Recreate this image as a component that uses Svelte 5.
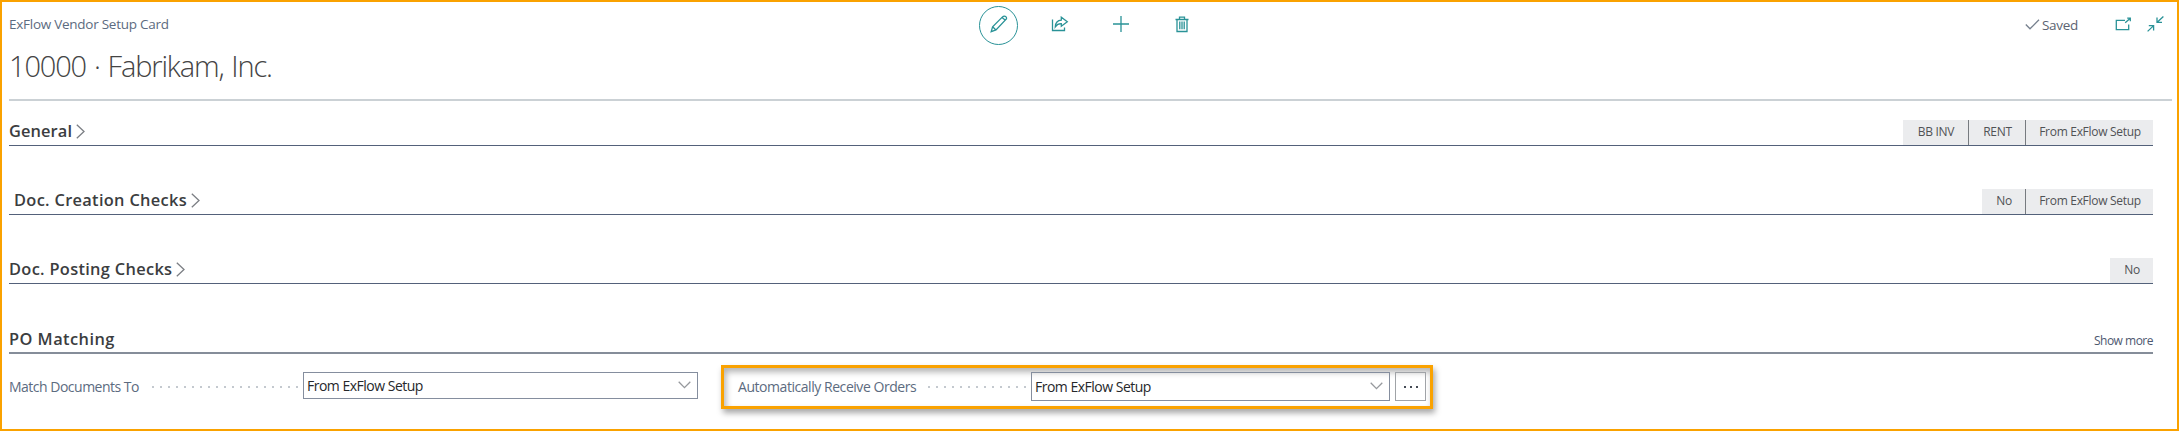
<script>
  const sections = [
    { title: 'General', cls: 'general', chips: ['BB INV', 'RENT', 'From ExFlow Setup'] },
    { title: 'Doc. Creation Checks', cls: 'creation', chips: ['No', 'From ExFlow Setup'] },
    { title: 'Doc. Posting Checks', cls: 'posting', chips: ['No'] }
  ];
  const chipWidths = { 'BB INV': 65, RENT: 57, 'From ExFlow Setup': 128, No: 43 };
</script>

{#snippet dropdown(value)}
  <div class="select">
    <span class="value">{value}</span>
    <svg width="13" height="8" viewBox="0 0 13 8"><path d="M.7.8 6.5 6.6 12.3.8" /></svg>
  </div>
{/snippet}

<main class="page">
  <header>
    <div class="names">
      <div class="caption"><span>ExFlow Vendor Setup Card</span></div>
      <h1>10000 · Fabrikam, Inc.</h1>
    </div>
    <nav class="actions">
      <button class="edit" aria-label="Edit">
        <svg width="18" height="18" viewBox="0 0 18 18"><path d="M1.2 16.6 2.6 11.8 12.5 1.9Q13.8.7 15.2 1.3 17 2.3 16.4 3.9L6 14.9ZM2.6 11.8 6 14.9M12 2.5 15.4 5.2" /></svg>
      </button>
      <button aria-label="Share">
        <svg width="18" height="16" viewBox="0 0 18 16"><path d="M1.5 3.5V14.5H13.5V11.5M1.5 14.5V13M4.3 10.8Q4.6 4.5 10.3 4.2V1.2L16.3 5.8 10.3 10.3V7.6Q6.5 7.5 4.3 10.8Z" /></svg>
      </button>
      <button aria-label="New">
        <svg width="18" height="18" viewBox="0 0 18 18"><path d="M9 1V17M1 9H17" /></svg>
      </button>
      <button aria-label="Delete">
        <svg width="14" height="17" viewBox="0 0 14 17"><path d="M.5 3.5H13.5M4.5 3.5V1.2H9.5V3.5M2 3.5V15.5H12V3.5M4.8 5.5V13.3M7 5.5V13.3M9.2 5.5V13.3" /></svg>
      </button>
    </nav>
    <div class="status">
      <svg class="check" width="15" height="11" viewBox="0 0 15 11"><path d="M.8 5.5 5 9.8 14 .8" /></svg>
      <span class="saved">Saved</span>
      <svg class="popout" width="17" height="14" viewBox="0 0 17 14"><path d="M10 3.3H1.3V12.7H13.7V7.5M10.2 5.8 15.3 1.2M12.2 1.2H15.3V4.2" /></svg>
      <svg class="collapse" width="17" height="16" viewBox="0 0 17 16"><path d="M16.4.6 10.2 6.2M10 1.6V6.4H15M.6 15.4 6.4 9.9M1.8 9.6H6.6V14.4" /></svg>
    </div>
  </header>

  {#each sections as s}
    <section class="fasttab {s.cls}">
      <h2><span>{s.title}</span></h2>
      <svg class="chevron" width="9" height="15" viewBox="0 0 9 15"><path d="M.8.8 8 7.5.8 14.2" /></svg>
      <div class="chips">
        {#each s.chips as c}
          <span class="chip" style="width: {chipWidths[c]}px">{c}</span>
        {/each}
      </div>
    </section>
  {/each}

  <section class="fasttab po">
    <h2><span>PO Matching</span></h2>
    <a class="more" href="#more">Show more</a>
  </section>

  <div class="fields">
    <div class="field first">
      <label for="match"><span>Match Documents To</span></label>
      <div class="dots"></div>
      {@render dropdown('From ExFlow Setup')}
    </div>
    <div class="field second">
      <label for="auto"><span>Automatically Receive Orders</span></label>
      <div class="dots"></div>
      {@render dropdown('From ExFlow Setup')}
      <button class="assist" aria-label="Assist">
        <svg width="14" height="2" viewBox="0 0 14 2"><path d="M0 0h2v2H0zM6 0h2v2h-2zM12 0h2v2h-2z" /></svg>
      </button>
    </div>
  </div>
</main>

<style>
  :global(body) { background: #fff; }
  * { box-sizing: border-box; }
  .page {
    width: 2179px; height: 431px;
    border: 2px solid #faa200;
    padding: 0 5px 0 7px;
    font-family: "Open Sans", "Noto Sans", sans-serif;
    color: #3b3d40;
    white-space: nowrap;
    overflow: hidden;
  }
  svg { fill: none; stroke: #299297; stroke-width: 1.3; display: block; flex: none; }
  button { background: none; border: 0; padding: 0; display: flex; align-items: center; justify-content: center; }
  h1, h2 { margin: 0; font-weight: 400; }
  header {
    width: 2163px; height: 99px;
    border-bottom: 2px solid #cbd1d5;
    display: grid;
    grid-template-columns: 970px 1fr auto;
    align-items: start;
  }
  .caption { margin-top: 12px; height: 20px; line-height: 20px; font-size: 13.5px; letter-spacing: -.26px; color: #5c6b80; }
  h1 { margin-top: 12px; line-height: 40px; font-size: 29px; font-weight: 300; letter-spacing: -1.15px; word-spacing: 1.5px; color: #444; }
  .actions { display: flex; align-items: center; height: 46px; }
  .actions button { width: 20px; margin-right: 41px; height: 40px; padding-bottom: 2px; }
  .actions .edit { width: 39px; height: 39px; border: 1.6px solid #299297; border-radius: 50%; margin-right: 32px; padding: 0 0 2px 0; }
  .status { display: flex; align-items: center; height: 44px; padding-right: 8px; }
  .check { stroke: #76808e; }
  .saved { font-size: 13.5px; letter-spacing: -.3px; color: #5c6472; margin: 1px 37px 0 2px; }
  .popout { margin-right: 15px; }
  .fasttab {
    width: 2144px; height: 69px;
    display: flex; align-items: flex-end;
    border-bottom: 1px solid #53617a;
  }
  .general { height: 45px; }
  .po { height: 70px; border-bottom: 2px solid #858d99; }
  h2 { font-size: 16.4px; font-weight: 600; line-height: 22px; padding-bottom: 3px; letter-spacing: .31px; }
  .general h2 { letter-spacing: .1px; }
  .creation h2 { padding-left: 5px; }
  .po h2 { padding-bottom: 2px; letter-spacing: .45px; }
  .chevron { stroke: #7c7f84; stroke-width: 1.3; margin: 0 0 6px 4px; }
  .chips { margin-left: auto; display: flex; height: 25px; }
  .chip { background: #ebecee; font-size: 12px; letter-spacing: -.3px; line-height: 24px; text-align: center; color: #505255; padding-left: 1px; }
  .chip + .chip { border-left: 1px solid #777b80; }
  .more { margin-left: auto; font-size: 12px; line-height: 22px; color: #4d5870; text-decoration: none; letter-spacing: -.5px; }
  .fields { display: flex; padding-top: 11px; align-items: flex-start; }
  .field { display: flex; align-items: center; font-size: 14px; }
  .first { width: 689px; height: 44px; margin-right: 23px; }
  .first .select { width: 395px; height: 27px; margin-bottom: 3px; }
  label { color: #5c6b80; letter-spacing: -.5px; padding-bottom: 1px; }
  .first label { width: 143px; }
  .dots {
    height: 2px; width: 147px; margin-right: 4px;
    background: repeating-linear-gradient(90deg, #c4c9cf 0 2px, transparent 2px 8px);
  }
  .select { height: 29px; margin-bottom: 1px; border: 1px solid #858e9e; display: flex; align-items: center; justify-content: space-between; padding: 0 6px 1px 3px; color: #26282b; letter-spacing: -.5px; }
  .select svg { stroke: #96999d; }
  .second {
    width: 712px; height: 44px;
    border: 3px solid #faa200;
    padding: 0 3px 0 14px;
    box-shadow: 2px 4px 6px rgba(0,0,0,.35), inset 2px 4px 6px rgba(0,0,0,.3);
  }
  .second label { width: 190px; letter-spacing: -.45px; }
  .second .dots { width: 99px; }
  .second .select { width: 359px; }
  .assist { width: 31px; height: 29px; margin: 0 0 1px 5px; border: 1px solid #a0a3a7; }
  .assist svg { stroke: none; fill: #454b55; }
</style>
